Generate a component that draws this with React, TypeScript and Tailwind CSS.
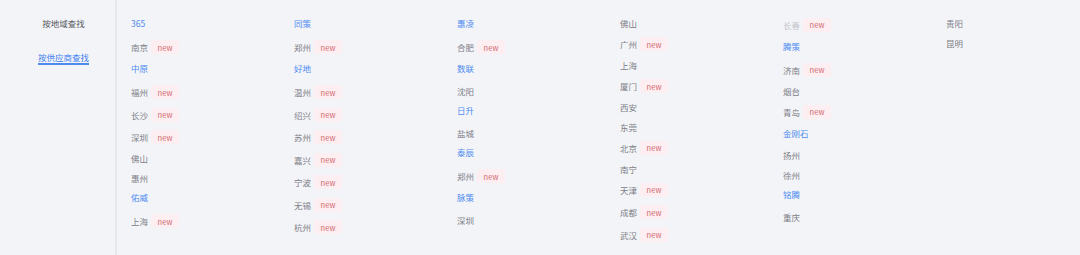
type Item = { t: string; kind: 'h' | 'c'; isNew?: boolean; faded?: boolean };

const h = (t: string): Item => ({ t, kind: 'h' });
const c = (t: string, isNew = false): Item => ({ t, kind: 'c', isNew });

const columns: Item[][] = [
  [h('365'), c('南京', true), h('中原'), c('福州', true), c('长沙', true), c('深圳', true), c('佛山'), c('惠州'), h('佑威'), c('上海', true)],
  [h('同策'), c('郑州', true), h('好地'), c('温州', true), c('绍兴', true), c('苏州', true), c('嘉兴', true), c('宁波', true), c('无锡', true), c('杭州', true)],
  [h('惠凌'), c('合肥', true), h('数联'), c('沈阳'), h('日升'), c('盐城'), h('泰辰'), c('郑州', true), h('脉策'), c('深圳')],
  [c('佛山'), c('广州', true), c('上海'), c('厦门', true), c('西安'), c('东莞'), c('北京', true), c('南宁'), c('天津', true), c('成都', true), c('武汉', true)],
  [{ t: '长春', kind: 'c', isNew: true, faded: true }, h('腾策'), c('济南', true), c('烟台'), c('青岛', true), h('金刚石'), c('扬州'), c('徐州'), h('铭腾'), c('重庆')],
  [c('贵阳'), c('昆明')],
];

function Row({ item }: { item: Item }) {
  if (item.kind === 'h') {
    return <div className="h-[20px] mb-[2.5px] flex items-center text-[#4d8bf0]">{item.t}</div>;
  }
  return (
    <div className={`flex items-center ${item.isNew ? 'h-[22.5px]' : 'h-[19.5px]'}`}>
      <span className={item.faded ? 'text-[#c3c6cc]' : 'text-[#7d8087]'}>{item.t}</span>
      {item.isNew && (
        <span className="ml-[3px] w-[28px] h-[14px] rounded-[3px] bg-[#fdeff1] text-[#d2656f] text-[7.5px] flex items-center justify-center">
          new
        </span>
      )}
    </div>
  );
}

export default function App() {
  return (
    <div
      className="w-[1080px] h-[255px] bg-[#f3f4f8] flex text-[8.5px] leading-none"
      style={{ fontFamily: '"Noto Sans CJK SC", "Noto Sans", sans-serif' }}
    >
      {/* Side tabs */}
      <div className="w-[117px] shrink-0 border-r-[2px] border-[#e8e9ee] pl-[12px] flex flex-col items-center pt-[18.5px]">
        <div className="text-[#555960] h-[10px] flex items-center">按地域查找</div>
        <div className="mt-[24px] text-[#3f7ff0] pb-[2px] border-b-[2px] border-[#4d8bf0]">按供应商查找</div>
      </div>

      {/* Supplier list */}
      <div className="flex pl-[14px] pt-[13.5px]">
        {columns.map((col, i) => (
          <div key={i} className="w-[163px] flex flex-col">
            {col.map((item, j) => (
              <Row key={j} item={item} />
            ))}
          </div>
        ))}
      </div>
    </div>
  );
}
